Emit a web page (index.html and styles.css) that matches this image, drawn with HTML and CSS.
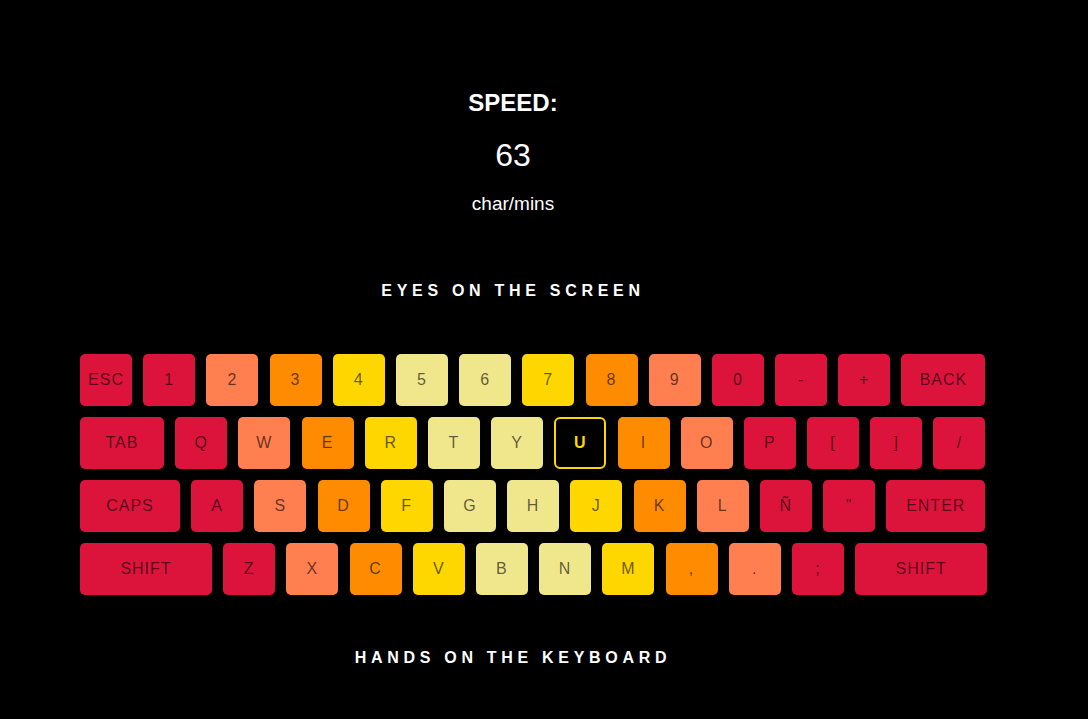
FILE: index.html
```html
<!DOCTYPE html>
<html lang="en">
<head>
<meta charset="utf-8">
<title>Typing speed</title>
<link rel="stylesheet" href="styles.css">
</head>
<body>
<main class="app">
  <section class="speed">
    <h2 class="speed-title">SPEED:</h2>
    <div class="speed-value">63</div>
    <div class="speed-unit">char/mins</div>
  </section>
  <p class="motto motto-top">EYES ON THE SCREEN</p>
  <div class="keyboard">
    <div class="row">
      <div class="key k-red w-md">ESC</div>
      <div class="key k-red">1</div>
      <div class="key k-coral">2</div>
      <div class="key k-orange">3</div>
      <div class="key k-gold">4</div>
      <div class="key k-khaki">5</div>
      <div class="key k-khaki">6</div>
      <div class="key k-gold">7</div>
      <div class="key k-orange">8</div>
      <div class="key k-coral">9</div>
      <div class="key k-red">0</div>
      <div class="key k-red">-</div>
      <div class="key k-red">+</div>
      <div class="key k-red w-lg">BACK</div>
    </div>
    <div class="row">
      <div class="key k-red w-lg">TAB</div>
      <div class="key k-red">Q</div>
      <div class="key k-coral">W</div>
      <div class="key k-orange">E</div>
      <div class="key k-gold">R</div>
      <div class="key k-khaki">T</div>
      <div class="key k-khaki">Y</div>
      <div class="key k-active">U</div>
      <div class="key k-orange">I</div>
      <div class="key k-coral">O</div>
      <div class="key k-red">P</div>
      <div class="key k-red">[</div>
      <div class="key k-red">]</div>
      <div class="key k-red">/</div>
    </div>
    <div class="row">
      <div class="key k-red w-xl">CAPS</div>
      <div class="key k-red">A</div>
      <div class="key k-coral">S</div>
      <div class="key k-orange">D</div>
      <div class="key k-gold">F</div>
      <div class="key k-khaki">G</div>
      <div class="key k-khaki">H</div>
      <div class="key k-gold">J</div>
      <div class="key k-orange">K</div>
      <div class="key k-coral">L</div>
      <div class="key k-red">Ñ</div>
      <div class="key k-red">"</div>
      <div class="key k-red w-xl2">ENTER</div>
    </div>
    <div class="row">
      <div class="key k-red w-xxl">SHIFT</div>
      <div class="key k-red">Z</div>
      <div class="key k-coral">X</div>
      <div class="key k-orange">C</div>
      <div class="key k-gold">V</div>
      <div class="key k-khaki">B</div>
      <div class="key k-khaki">N</div>
      <div class="key k-gold">M</div>
      <div class="key k-orange">,</div>
      <div class="key k-coral">.</div>
      <div class="key k-red">;</div>
      <div class="key k-red w-xxl">SHIFT</div>
    </div>
  </div>
  <p class="motto motto-bottom">HANDS ON THE KEYBOARD</p>
</main>
</body>
</html>
```
FILE: styles.css
```css
html, body {
  margin: 0;
  padding: 0;
  background: #000;
}

body {
  font-family: "Liberation Sans", Arial, sans-serif;
  color: #fff;
  min-height: 719px;
  overflow: hidden;
}

.app {
  width: 1026px;
  padding-top: 89px;
}

.speed {
  display: flex;
  flex-direction: column;
  align-items: center;
  gap: 20px;
}

.speed-title {
  margin: 0;
  font-size: 24px;
  line-height: 28px;
  font-weight: 700;
}

.speed-value {
  font-size: 32px;
  line-height: 36px;
}

.speed-unit {
  font-size: 19px;
  line-height: 22px;
}

.motto {
  margin: 0;
  text-align: center;
  font-size: 16px;
  line-height: 20px;
  font-weight: 700;
  letter-spacing: 4.7px;
}

.motto-top {
  margin-top: 66px;
}

.motto-bottom {
  margin-top: 53px;
}

.keyboard {
  margin-top: 53px;
  padding-left: 80px;
  display: flex;
  flex-direction: column;
  gap: 11px;
}

.row {
  display: flex;
  gap: 11.2px;
}

.key {
  flex: none;
  width: 52px;
  height: 52px;
  border-radius: 5px;
  display: flex;
  align-items: center;
  justify-content: center;
  font-size: 16px;
  letter-spacing: 1px;
  color: rgba(0, 0, 0, 0.62);
  box-sizing: border-box;
}

.w-md { width: 52px; }
.w-lg { width: 84px; }
.w-xl { width: 100px; }
.w-xl2 { width: 99px; }
.w-xxl { width: 132px; }

.k-red { background: #dc143c; }
.k-coral { background: #ff7f50; }
.k-orange { background: #ff8c00; }
.k-gold { background: #ffd700; }
.k-khaki { background: #f0e68c; }

.k-active {
  background: #000;
  border: 2px solid #ffd700;
  border-radius: 6px;
  color: #ffd700;
  font-weight: 700;
}
```
